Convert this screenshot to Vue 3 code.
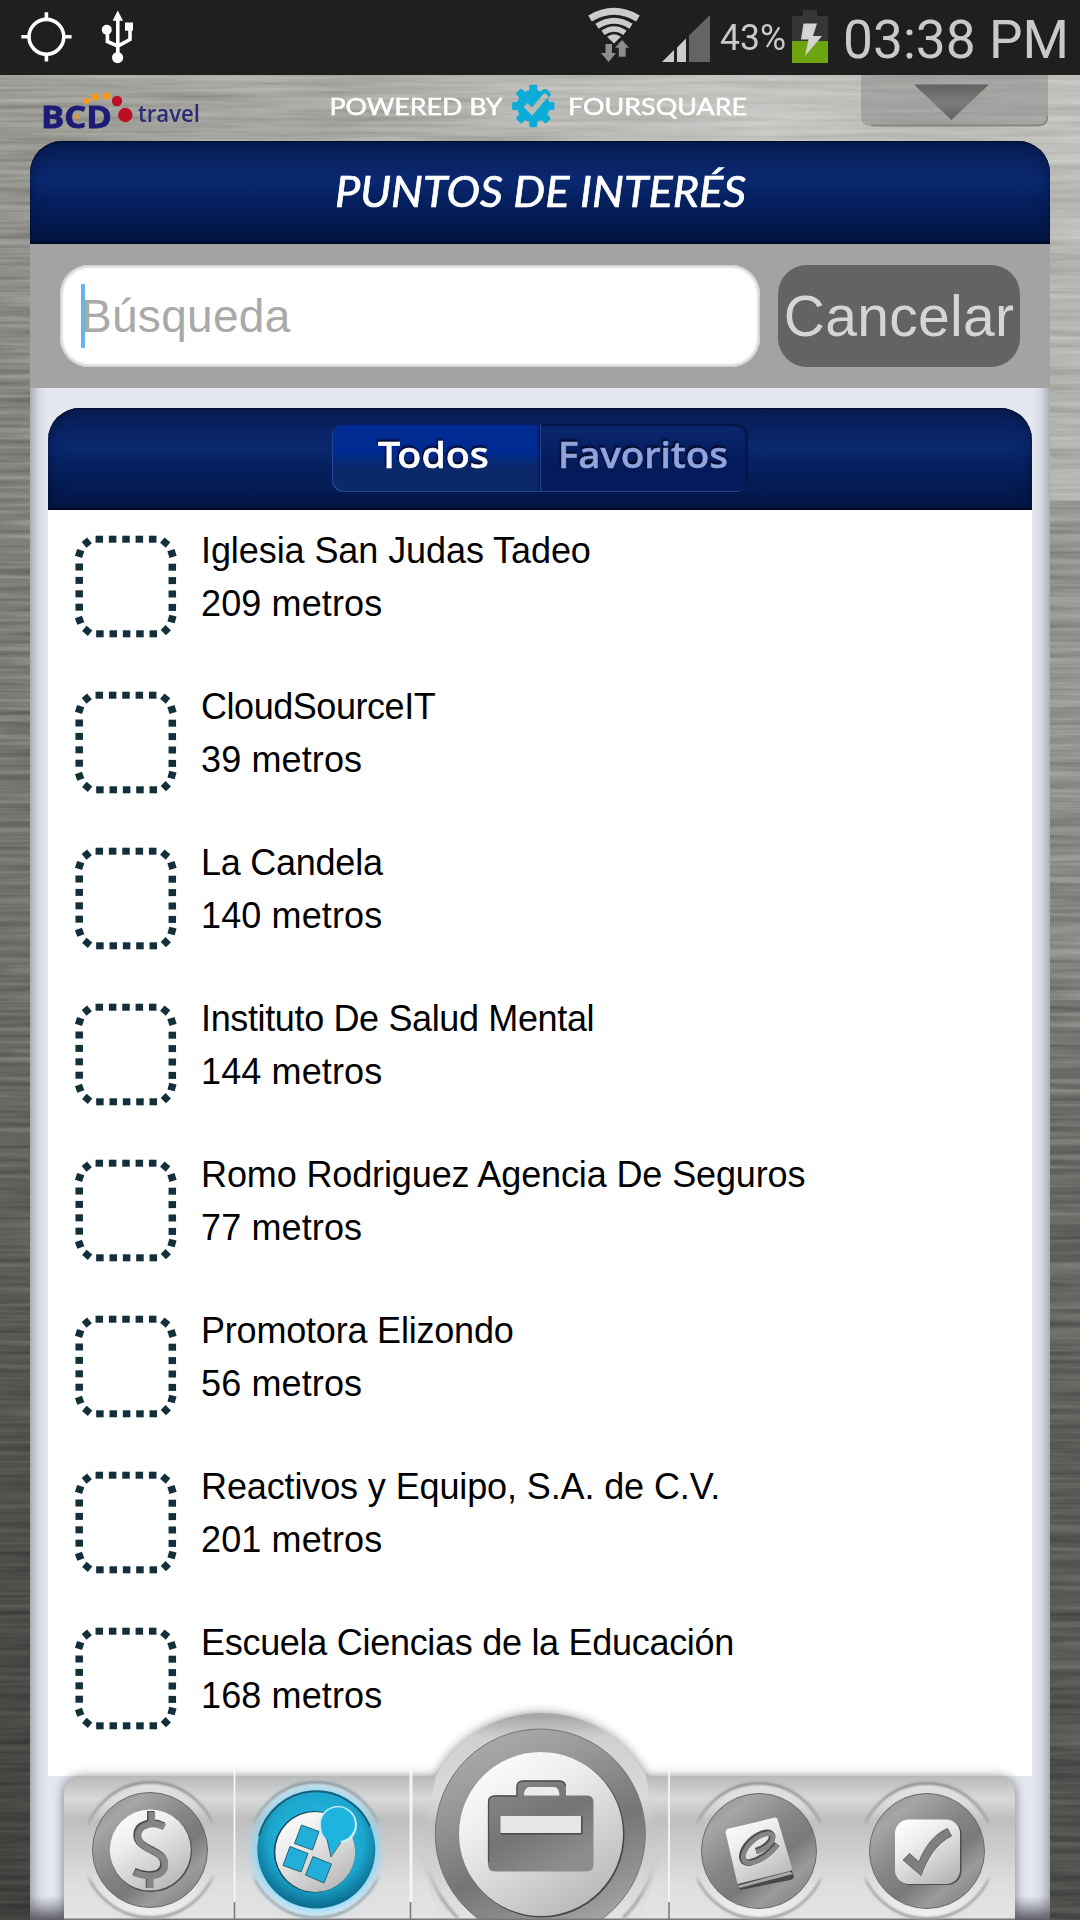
<script setup>
// `tracking` is the letter spacing of the name, in pixels
const places = [
  { name: 'Iglesia San Judas Tadeo', distance: '209 metros', tracking: -0.08 },
  { name: 'CloudSourceIT', distance: '39 metros', tracking: -0.45 },
  { name: 'La Candela', distance: '140 metros', tracking: -0.25 },
  { name: 'Instituto De Salud Mental', distance: '144 metros', tracking: -0.36 },
  { name: 'Romo Rodriguez Agencia De Seguros', distance: '77 metros', tracking: -0.12 },
  { name: 'Promotora Elizondo', distance: '56 metros', tracking: -0.2 },
  { name: 'Reactivos y Equipo, S.A. de C.V.', distance: '201 metros', tracking: -0.12 },
  { name: 'Escuela Ciencias de la Educación', distance: '168 metros', tracking: -0.29 },
]

// Dots of the dashed frame: [centre x, centre y, rotation]
const dots = []
for (let i = 0; i < 5; i++) {
  dots.push([24.3 + i * 13.35, 4.2, 0], [24.9 + i * 13.35, 98.8, 0])
}
for (let i = 0; i < 4; i++) {
  dots.push([4.2, 32 + i * 13.4, 0], [97.3, 32.2 + i * 13.4, 0])
}
dots.push(
  [4.6, 18.5, 18], [11.8, 7.6, 50], [90.2, 7.6, 40], [97, 18.5, -18],
  [4.6, 85.2, -20], [12.2, 95.8, 40], [90.8, 95.2, 45], [97, 84, 15],
)

const teeth = [0, 45, 90, 135, 180, 225, 270, 315]
</script>

<template>
  <div class="screen">
    <svg class="metal" width="1080" height="1845" preserveAspectRatio="none">
      <defs>
        <filter id="brushed" x="0" y="0" width="100%" height="100%" color-interpolation-filters="sRGB">
          <feTurbulence type="fractalNoise" baseFrequency="0.007 0.17" numOctaves="3" seed="8" />
          <feColorMatrix type="matrix" values="1.2 0 0 0 -0.1  1.2 0 0 0 -0.1  1.2 0 0 0 -0.1  0 0 0 0 1" />
        </filter>
      </defs>
      <rect width="1080" height="1845" filter="url(#brushed)" />
    </svg>

    <header class="status">
      <svg class="status-left" width="140" height="75" viewBox="0 0 140 75">
        <g fill="none" stroke="#fff" stroke-width="3.6">
          <circle cx="46.4" cy="36.8" r="17.4" />
          <path d="M46.4 12.3V20M46.4 54V61.5M21.4 36.8H29M64 36.8H71.6" />
        </g>
        <g fill="#fff">
          <path d="M117.8 10.5L123 20.8H112.6Z" />
          <circle cx="106.8" cy="29.8" r="5" />
          <rect x="125" y="22.5" width="8" height="8.2" />
          <circle cx="117.6" cy="57.6" r="5.6" />
        </g>
        <path d="M117.8 18V55M107.4 32V41.5L117.8 46.2M130 30V39.5L117.8 46.2" fill="none" stroke="#fff" stroke-width="3.6" />
      </svg>
      <svg class="status-right" width="500" height="75" viewBox="580 0 500 75">
        <g fill="none" stroke="#cbcbcb" stroke-width="5.4">
          <path d="M590 18.4Q614 4.2 638 18.4" stroke-width="7" />
          <path d="M597 26.2Q614 15.2 631 26.2" stroke-width="6" />
          <path d="M603 32.8Q614 25.2 625 32.8" />
        </g>
        <path d="M607 36.8Q614 31.6 621 36.8L614 43.4Z" fill="#cbcbcb" />
        <path d="M605.5 44H612V53H616L608.6 62L601 53H605.5Z" fill="#8d8d8d" />
        <path d="M618.5 57H626V48H629.5L622 39.5L614.5 48H618.5Z" fill="#8d8d8d" stroke="#1f1f1f" stroke-width=".6" />
        <path d="M662 62L674 50V62Z" fill="#cbcbcb" />
        <path d="M677 62V47.5L686 38.5V62Z" fill="#cbcbcb" />
        <path d="M689 62V35.5L710 15V62Z" fill="#646464" />
        <text x="720" y="50" font-size="36" textLength="66" lengthAdjust="spacingAndGlyphs" fill="#c9c9c9">43%</text>
        <path d="M803 10H817V16H828V41H792V16H803Z" fill="#363636" />
        <rect x="792" y="41" width="36" height="22" fill="#6fa411" />
        <path d="M803.5 23.5H817L813 36H822L805 56L808.5 39.5H801Z" fill="#d4d4d4" />
        <text x="843" y="58.3" font-size="54" textLength="226" lengthAdjust="spacingAndGlyphs" fill="#c9c9c9">03:38 PM</text>
      </svg>
    </header>

    <div class="brand">
      <svg width="1080" height="66" viewBox="0 75 1080 66">
        <defs>
          <linearGradient id="tri" x1="0" y1="0" x2="0" y2="1">
            <stop offset="0" stop-color="#555" /><stop offset=".5" stop-color="#757573" /><stop offset="1" stop-color="#555" />
          </linearGradient>
          <mask id="tick">
            <rect x="500" y="75" width="70" height="66" fill="#fff" />
            <path d="M525.5 105L532 111.5L546.5 94.5" fill="none" stroke="#000" stroke-width="5.5" />
          </mask>
        </defs>
        <text class="bcd" x="41" y="127.500" font-size="29.500" textLength="71" lengthAdjust="spacingAndGlyphs">BCD</text>
        <text class="travel" x="138" y="122" font-size="23.5" textLength="62" lengthAdjust="spacingAndGlyphs">travel</text>
        <g fill="#f79a1c">
          <circle cx="86.4" cy="101" r="3" /><circle cx="95.2" cy="97" r="3.7" />
          <circle cx="106.5" cy="96" r="3.8" /><circle cx="77" cy="116.5" r="2.8" fill="#d79a4e" />
        </g>
        <g fill="#b91024"><circle cx="117" cy="101" r="5.2" /><circle cx="125.3" cy="115" r="7.2" /></g>
        <text class="powered" x="329.5" y="115.200" textLength="173" lengthAdjust="spacingAndGlyphs">POWERED BY</text>
        <text class="powered" x="568" y="115.200" textLength="179" lengthAdjust="spacingAndGlyphs">FOURSQUARE</text>
        <g mask="url(#tick)" fill="#0bacd8">
          <circle cx="533.3" cy="106" r="16.3" />
          <rect v-for="a in teeth" :key="a" x="529.3" y="84.8" width="8" height="10" rx="1.5" :transform="`rotate(${a} 533.3 106)`" />
          <path d="M533 101L543 89.5Q545 88.500 551 95L546 100L537 111Z" />
        </g>
        <path d="M861 75H1048V116Q1048 126 1038 126H871Q861 126 861 116Z" fill="#777" fill-opacity=".38" />
        <path d="M871 125.500H1038Q1047.500 125.500 1047.500 116" fill="none" stroke="#777773" stroke-opacity=".7" stroke-width="1.8" />
        <path d="M914 84.500H989L951.500 120Z" fill="url(#tri)" fill-opacity=".85" />
      </svg>
    </div>

    <main class="panel">
      <div class="bar title">
        <svg width="420" height="60" viewBox="330 165 420 60">
          <text x="335" y="207" font-size="42.500" textLength="411" lengthAdjust="spacingAndGlyphs">PUNTOS DE INTERÉS</text>
        </svg>
      </div>

      <div class="search">
        <div class="field"><span class="caret"></span><span class="hint">Búsqueda</span></div>
        <button class="cancel">Cancelar</button>
      </div>

      <section class="card">
        <div class="bar tabs">
          <div class="tab active">
            <svg width="120" height="50" viewBox="0 0 120 50">
              <text x="2" y="37.500" textLength="111" lengthAdjust="spacingAndGlyphs">Todos</text>
            </svg>
          </div>
          <div class="tab">
            <svg width="180" height="50" viewBox="0 0 180 50">
              <text x="4" y="37.500" textLength="170" lengthAdjust="spacingAndGlyphs">Favoritos</text>
            </svg>
          </div>
        </div>
        <ul class="list">
          <li v-for="p in places" :key="p.name">
            <svg class="box" width="102" height="103" viewBox="0 0 102 103">
              <rect
                v-for="(d, i) in dots" :key="i"
                :x="d[0] - 3.75" :y="d[1] - 3.5" width="7.5" height="7"
                :transform="`rotate(${d[2]} ${d[0]} ${d[1]})`"
              />
            </svg>
            <div class="label">
              <div :style="{ letterSpacing: p.tracking + 'px' }">{{ p.name }}</div>
              <div class="distance">{{ p.distance }}</div>
            </div>
          </li>
        </ul>
      </section>
    </main>

    <nav class="dock">
      <svg width="1080" height="230" viewBox="0 1690 1080 230">
        <defs>
          <linearGradient id="plate" gradientUnits="userSpaceOnUse" x1="0" y1="1776" x2="0" y2="1920">
            <stop offset="0" stop-color="#b9b9b9" /><stop offset=".16" stop-color="#d9d9d9" />
            <stop offset=".3" stop-color="#bfbfbf" /><stop offset=".75" stop-color="#dedede" /><stop offset="1" stop-color="#e4e4e4" />
          </linearGradient>
          <linearGradient id="hump" gradientUnits="userSpaceOnUse" x1="0" y1="1717" x2="0" y2="1920">
            <stop offset="0" stop-color="#a8a8a8" /><stop offset=".1" stop-color="#d0d0d0" />
            <stop offset=".4" stop-color="#dadada" /><stop offset=".52" stop-color="#c2c2c2" /><stop offset="1" stop-color="#e4e4e4" />
          </linearGradient>
          <linearGradient id="steel" x1="0.1" y1="0" x2=".9" y2="1">
            <stop offset="0" stop-color="#8c8c8c" /><stop offset=".18" stop-color="#a6a6a6" />
            <stop offset=".45" stop-color="#858585" /><stop offset=".62" stop-color="#797979" />
            <stop offset=".78" stop-color="#9b9b9b" /><stop offset="1" stop-color="#7d7d7d" />
          </linearGradient>
          <linearGradient id="big" x1=".15" y1="0" x2=".6" y2="1">
            <stop offset="0" stop-color="#aeaeae" /><stop offset=".25" stop-color="#9c9c9c" />
            <stop offset=".4" stop-color="#8d8d8d" /><stop offset=".62" stop-color="#757575" />
            <stop offset=".85" stop-color="#909090" /><stop offset="1" stop-color="#a5a5a5" />
          </linearGradient>
          <linearGradient id="pearl" x1="0.1" y1="0" x2=".75" y2="1">
            <stop offset="0" stop-color="#fff" /><stop offset=".35" stop-color="#eee" /><stop offset="1" stop-color="#b7b7b7" />
          </linearGradient>
          <linearGradient id="case" x1="0" y1="0" x2=".6" y2="1">
            <stop offset="0" stop-color="#8a8a8a" /><stop offset=".55" stop-color="#747474" /><stop offset="1" stop-color="#8d8d8d" />
          </linearGradient>
          <radialGradient id="blue" cx=".5" cy=".42" r=".56">
            <stop offset="0" stop-color="#27bfe9" /><stop offset=".72" stop-color="#1ca6cd" /><stop offset="1" stop-color="#0c6f92" />
          </radialGradient>
          <linearGradient id="foot" x1="0" y1="0" x2="0" y2="1">
            <stop offset="0" stop-color="#60606a" stop-opacity="0" /><stop offset="1" stop-color="#55555c" stop-opacity=".85" />
          </linearGradient>
          <linearGradient id="halo" x1="0" y1="0" x2="0" y2="1">
            <stop offset="0" stop-color="#8a8a8a" /><stop offset=".26" stop-color="#9a9a9a" stop-opacity=".8" />
            <stop offset=".32" stop-color="#999" stop-opacity="0" /><stop offset=".68" stop-color="#999" stop-opacity="0" />
            <stop offset=".74" stop-color="#999" stop-opacity=".8" /><stop offset="1" stop-color="#999" />
          </linearGradient>
          <linearGradient id="arc" gradientUnits="userSpaceOnUse" x1="0" y1="1865" x2="0" y2="1900">
            <stop offset="0" stop-color="#999" stop-opacity="0" /><stop offset="1" stop-color="#999" stop-opacity=".8" />
          </linearGradient>
          <linearGradient id="glow" x1="0" y1="0" x2="0" y2="1">
            <stop offset="0" stop-color="#e4e4e4" /><stop offset=".3" stop-color="#dfdfdf" stop-opacity="0" />
            <stop offset=".7" stop-color="#e8e8e8" stop-opacity="0" /><stop offset="1" stop-color="#f0f0f0" />
          </linearGradient>
          <filter id="soft" x="-20%" y="-30%" width="140%" height="160%"><feGaussianBlur stdDeviation="5.500" /></filter>
          <filter id="slight" x="-20%" y="-20%" width="140%" height="140%"><feGaussianBlur stdDeviation="1.200" /></filter>
        </defs>

        <rect x="30" y="1896" width="1020" height="24" fill="url(#foot)" />
        <g fill="#4a4a50" filter="url(#soft)" opacity=".7">
          <path d="M64 1925V1792Q66 1777 84 1777H436A119 119 0 0 1 646 1777H1000Q1015 1778 1015 1795V1925Z" />
        </g>
        <path d="M64 1920V1792Q66 1776 82 1776H1000Q1015 1777 1015 1794V1920Z" fill="url(#plate)" />
        <path d="M436 1776A119 119 0 0 1 646 1776L660 1860L640 1920H440L420 1860Z" fill="url(#hump)" />
        <path d="M64 1919.300H1015" stroke="#777" stroke-width="1.400" />

        <path d="M234.500 1768V1902M669 1768V1902" stroke="#f8f8f8" stroke-width="1.700" />
        <path d="M411 1768V1902" stroke="#f6f6f9" stroke-width="2.800" />
        <path d="M234.500 1902V1920M410.500 1902V1920M669 1902V1920" stroke="#777" stroke-width="1.500" />

        <g v-for="c in [[150.5, 1850], [316, 1850], [759, 1851], [927, 1851]]" :key="c[0]">
          <circle :cx="c[0]" :cy="c[1]" r="67" fill="url(#glow)" />
          <circle :cx="c[0]" :cy="c[1]" r="67.5" fill="none" stroke="url(#halo)" stroke-width="2.5" filter="url(#slight)" />
        </g>
        <path d="M428 1868A117 117 0 0 0 458 1918M653 1868A117 117 0 0 1 623 1918" fill="none" stroke="url(#arc)" stroke-width="3" filter="url(#slight)" />

        <!-- currency -->
        <circle cx="150" cy="1850" r="57.500" fill="url(#steel)" stroke="#6a6a6a" stroke-width="1" />
        <circle cx="151" cy="1851" r="41" fill="#4e4e4e" />
        <circle cx="150.300" cy="1850" r="40.500" fill="url(#pearl)" />
        <g fill="none" stroke-width="7.500">
          <path d="M163.500 1826C152 1820 137 1824 137 1835C137 1850 164 1849 164 1863C164 1877 146 1877 134 1871.500M150.800 1811V1820M149.500 1879V1888" stroke="#4d4d4d" />
          <path d="M164.500 1827C153 1821 138 1825 138 1836C138 1851 165 1850 165 1864C165 1878 147 1878 134.500 1872.500M151.800 1812V1822M150 1879V1888" stroke="#858585" stroke-width="6.500" />
        </g>

        <!-- places -->
        <circle cx="316" cy="1850" r="62" fill="#7fd8ff" filter="url(#soft)" />
        <circle cx="316.300" cy="1849.500" r="59" fill="url(#blue)" />
        <path d="M259 1836A59 59 0 0 1 370 1826" fill="none" stroke="#174f66" stroke-width="2" opacity=".8" />
        <circle cx="314.500" cy="1851.800" r="40.800" fill="#1b4b5c" />
        <circle cx="315.300" cy="1852" r="40" fill="url(#pearl)" />
        <circle cx="338" cy="1825" r="19" fill="#ccecf6" />
        <path d="M321 1826A17 17 0 1 1 341 1841L331 1856L327 1840Q321 1834 321 1826Z" fill="#1fb4df" />
        <path d="M327 1839L331 1857L341 1842" fill="none" stroke="#31626f" stroke-width="1" />
        <g fill="#22aed8" stroke="#256779" stroke-width="1">
          <path d="M301.500 1825L319 1831.500L312.500 1850L294.500 1843.500Z" />
          <path d="M290 1846.500L308 1853.500L301 1872L283 1865.500Z" />
          <path d="M313 1856.500L331.500 1864L324 1883L305.500 1875Z" />
        </g>

        <!-- trips -->
        <circle cx="540.300" cy="1834" r="105" fill="url(#big)" stroke="#727272" stroke-width="1" />
        <circle cx="542" cy="1835" r="82.500" fill="#464646" />
        <circle cx="541" cy="1834" r="82" fill="url(#pearl)" />
        <path d="M488 1802Q488 1795.500 495 1795.500H516.500V1787Q516.500 1780.500 523 1780.500H559Q566 1780.500 566 1787V1795.500H587Q593.500 1795.500 593.500 1802V1865Q593.500 1871.500 586 1871.500H495Q488 1871.500 488 1864Z" fill="url(#case)" />
        <path d="M488.500 1862V1802Q488.500 1796 495 1796H517V1787Q517 1781 523 1781H559Q565 1781 565.500 1786" fill="none" stroke="#4d4d4d" stroke-width="1.300" />
        <path d="M524 1795.500Q524 1787 530 1787H554Q559 1787 559.500 1795.500Z" fill="#ededed" />
        <path d="M500.500 1833.500H581.500V1816" fill="none" stroke="#4b4b4b" stroke-width="2" />
        <rect x="500.500" y="1816" width="80.500" height="17" fill="#e6e6e6" />
        <path d="M460 1920L480 1918.500H602L606 1920Z" fill="#777" />

        <!-- guide -->
        <circle cx="759" cy="1851" r="57.500" fill="url(#steel)" stroke="#6a6a6a" stroke-width="1" />
        <path d="M738 1884L791 1869L794 1876Q794 1879 790 1880L740 1890Z" fill="#484848" />
        <path d="M738.500 1885.500L790 1871.500L793 1874L739.500 1888Z" fill="#a9a9a9" />
        <path d="M727 1829L775 1817.500Q777 1817.500 777.500 1819L792 1868Q792 1870.500 790 1871L737.500 1884L725.500 1832Z" fill="url(#pearl)" />
        <path d="M756 1851C766 1848 773 1841 772 1835.500C769 1829 755 1835 747 1845C739 1856 742 1864 750 1862.500C760 1860 770 1853 777 1844" fill="none" stroke="#4f4f4f" stroke-width="6.500" />
        <path d="M756.500 1852C766 1849 774 1842 773 1836C770 1830 756 1836 748 1846C740 1857 743 1864 751 1863C761 1861 770 1854 777.500 1845" fill="none" stroke="#868686" stroke-width="4.600" />

        <!-- tasks -->
        <circle cx="927" cy="1851" r="57.500" fill="url(#steel)" stroke="#6a6a6a" stroke-width="1" />
        <rect x="896" y="1820.500" width="65.500" height="64.500" rx="14" fill="#4e4e4e" />
        <rect x="895" y="1819.500" width="65" height="64.500" rx="14" fill="url(#pearl)" />
        <path d="M903 1860L909.500 1853.500L919 1862C924 1848 934 1834 947.500 1828.500L951.500 1836C937 1843 927 1858 921 1875.500Z" fill="#7f7f7f" stroke="#555" stroke-width=".8" />
      </svg>
    </nav>
  </div>
</template>

<style>
body { margin: 0; }
</style>

<style scoped>
.screen {
  position: relative;
  width: 1080px;
  height: 1920px;
  overflow: hidden;
  display: flex;
  flex-direction: column;
  font-family: "Liberation Sans", Arial, sans-serif;
  background:
    linear-gradient(90deg, transparent 40%, rgba(255, 255, 255, .36) 100%) 0 0 / 100% 500px no-repeat,
    linear-gradient(90deg, transparent 40%, rgba(255, 255, 255, .18) 100%) 0 500px / 100% 500px no-repeat,
    linear-gradient(90deg, transparent 40%, rgba(255, 255, 255, .07) 100%) 0 1000px / 100% 920px no-repeat,
    linear-gradient(90deg, transparent 0%, rgba(255, 255, 255, .16) 30%, rgba(255, 255, 255, .3) 65%, transparent 100%) 0 0 / 100% 142px no-repeat,
    linear-gradient(#9d9d97 75px, #84847f 400px, #72726d 900px, #555550 1400px, #40403d 1900px);
}
.metal {
  position: absolute;
  left: 0;
  top: 75px;
  opacity: .27;
  mix-blend-mode: overlay;
}
.status {
  position: relative;
  height: 75px;
  flex: none;
  display: flex;
  justify-content: space-between;
  background: #1f1f1f;
}
.status text { font-family: Roboto, sans-serif; }
svg { display: block; }
.brand { position: relative; height: 66px; flex: none; }
.bcd { font-family: "Open Sans", sans-serif; font-weight: 700; fill: #1c1c75; stroke: #1c1c75; stroke-width: .8; }
.travel { font-family: "Open Sans", sans-serif; font-weight: 600; fill: #2b2b78; }
.powered { font-family: Lato, sans-serif; font-weight: 400; font-size: 24px; fill: #fff; stroke: #fff; stroke-width: .5; }
.panel {
  position: relative;
  flex: 1;
  margin: 0 30px;
  display: flex;
  flex-direction: column;
  background: #e4e7ee;
  border-radius: 32px 32px 0 0;
  box-shadow: inset 0 0 14px 2px rgba(80, 80, 95, .65);
}
.bar {
  flex: none;
  display: flex;
  justify-content: center;
  border-radius: 32px 32px 0 0;
  background: linear-gradient(#071e54, #0a2870 38%, #05205f 58%, #041a50 80%, #031646);
  box-shadow: inset 0 0 16px rgba(0, 8, 35, .45), inset 0 -2px 1px #010a26, inset 0 1px 1px #020d2c;
}
.title { height: 103px; align-items: flex-start; padding-top: 24px; box-sizing: border-box; }
.title text { font-family: Lato, sans-serif; font-style: italic; font-weight: 400; fill: #fff; stroke: #fff; stroke-width: .7; }
.search {
  flex: none;
  height: 144px;
  display: flex;
  align-items: center;
  justify-content: space-between;
  padding: 0 30px;
  background: #a3a3a3;
}
.field {
  width: 700px;
  height: 102px;
  box-sizing: border-box;
  display: flex;
  align-items: center;
  padding-left: 21px;
  border-radius: 29px;
  background: #fff;
  box-shadow: inset 0 0 3px 2px #c9c9c9;
}
.caret { width: 4px; height: 64px; background: #66b5ee; }
.hint { margin-left: -4px; font-size: 46px; letter-spacing: .3px; color: #a9a9a9; }
.cancel {
  width: 242px;
  height: 102px;
  padding: 0;
  border: 0;
  border-radius: 29px;
  background: #636363;
  color: #d5d5d5;
  font: 57px "Liberation Sans", Arial, sans-serif;
  letter-spacing: .3px;
}
.card {
  height: 1368px;
  margin: 20px 18px 0;
  background: #fff;
  border-radius: 32px 32px 0 0;
}
.tabs { height: 102px; align-items: center; }
.tab {
  width: 208px;
  height: 68px;
  box-sizing: border-box;
  display: flex;
  align-items: flex-start;
  justify-content: center;
  padding-top: 6px;
  margin-bottom: 2px;
  border-radius: 0 12px 12px 0;
  background: linear-gradient(#0a276e, #04195a 70%, #061d5c);
  box-shadow: inset 1px -1px 1px #27458f, inset -2px 2px 2px #031442;
}
.tab.active {
  border-radius: 12px 0 0 12px;
  background: linear-gradient(#002b93 40%, #0b2868 65%, #0b2868);
  box-shadow: inset 1px -1px 1px #27489a, inset -2px 1px 1px #031a60;
}
.tab text {
  font-family: "Noto Sans", "Open Sans", sans-serif;
  font-weight: 500;
  font-size: 36.5px;
  fill: #92a4dc;
  stroke: #92a4dc;
  stroke-width: .6;
}
.tab svg { filter: drop-shadow(-1px -2px 1px rgba(0, 0, 20, .85)); }
.tab.active text { fill: #fff; stroke: #fff; }
.list { margin: 0; padding: 14px 0 0; list-style: none; }
.list li { height: 156px; display: flex; }
.box { flex: none; margin: 11px 24px 0 27px; fill: #132f3c; }
.label { font-size: 36px; line-height: 53px; color: #000; white-space: nowrap; }
.distance { letter-spacing: .12px; }
.dock { position: absolute; left: 0; bottom: 0; }
</style>
